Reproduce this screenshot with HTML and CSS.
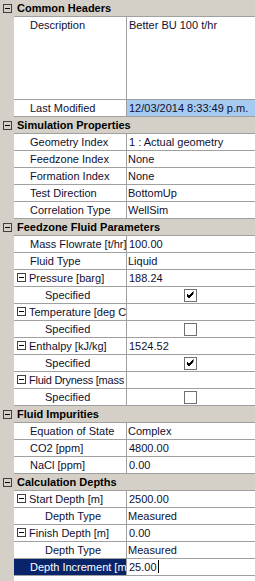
FILE: index.html
```html
<!DOCTYPE html>
<html lang="en">
<head>
<meta charset="UTF-8">
<title>Properties</title>
<link rel="stylesheet" href="styles.css">
</head>
<body>

<div class="grid">

    <!-- Common Headers -->
    <div class="row cat">
        <div class="gutter"><svg class="exp" width="9" height="9"><rect x="0.5" y="0.5" width="8" height="8" fill="none" stroke="#404040"/><path d="M2 4.5h5" stroke="#000"/></svg></div>
        <div class="cat-title">Common Headers</div>
    </div>
    <div class="row tall">
        <div class="gutter"></div>
        <div class="name">Description</div>
        <div class="value">Better BU 100 t/hr</div>
    </div>
    <div class="row">
        <div class="gutter"></div>
        <div class="name">Last Modified</div>
        <div class="value picked">12/03/2014 8:33:49 p.m.</div>
    </div>

    <!-- Simulation Properties -->
    <div class="row cat">
        <div class="gutter"><svg class="exp" width="9" height="9"><rect x="0.5" y="0.5" width="8" height="8" fill="none" stroke="#404040"/><path d="M2 4.5h5" stroke="#000"/></svg></div>
        <div class="cat-title">Simulation Properties</div>
    </div>
    <div class="row"><div class="gutter"></div><div class="name">Geometry Index</div><div class="value">1 : Actual geometry</div></div>
    <div class="row"><div class="gutter"></div><div class="name">Feedzone Index</div><div class="value list">None</div></div>
    <div class="row"><div class="gutter"></div><div class="name">Formation Index</div><div class="value list">None</div></div>
    <div class="row"><div class="gutter"></div><div class="name">Test Direction</div><div class="value list">BottomUp</div></div>
    <div class="row"><div class="gutter"></div><div class="name">Correlation Type</div><div class="value list">WellSim</div></div>

    <!-- Feedzone Fluid Parameters -->
    <div class="row cat">
        <div class="gutter"><svg class="exp" width="9" height="9"><rect x="0.5" y="0.5" width="8" height="8" fill="none" stroke="#404040"/><path d="M2 4.5h5" stroke="#000"/></svg></div>
        <div class="cat-title">Feedzone Fluid Parameters</div>
    </div>
    <div class="row"><div class="gutter"></div><div class="name">Mass Flowrate [t/hr]</div><div class="value">100.00</div></div>
    <div class="row"><div class="gutter"></div><div class="name">Fluid Type</div><div class="value list">Liquid</div></div>
    <div class="row">
        <div class="gutter"></div>
        <div class="name parent"><svg class="exp" width="9" height="9"><rect x="0.5" y="0.5" width="8" height="8" fill="none" stroke="#404040"/><path d="M2 4.5h5" stroke="#000"/></svg><span>Pressure [barg]</span></div>
        <div class="value">188.24</div>
    </div>
    <div class="row"><div class="gutter"></div><div class="name child">Specified</div><div class="value box"><span class="check on"></span></div></div>
    <div class="row">
        <div class="gutter"></div>
        <div class="name parent"><svg class="exp" width="9" height="9"><rect x="0.5" y="0.5" width="8" height="8" fill="none" stroke="#404040"/><path d="M2 4.5h5" stroke="#000"/></svg><span>Temperature [deg C</span></div>
        <div class="value"></div>
    </div>
    <div class="row"><div class="gutter"></div><div class="name child">Specified</div><div class="value box"><span class="check"></span></div></div>
    <div class="row">
        <div class="gutter"></div>
        <div class="name parent"><svg class="exp" width="9" height="9"><rect x="0.5" y="0.5" width="8" height="8" fill="none" stroke="#404040"/><path d="M2 4.5h5" stroke="#000"/></svg><span>Enthalpy [kJ/kg]</span></div>
        <div class="value">1524.52</div>
    </div>
    <div class="row"><div class="gutter"></div><div class="name child">Specified</div><div class="value box"><span class="check on"></span></div></div>
    <div class="row">
        <div class="gutter"></div>
        <div class="name parent"><svg class="exp" width="9" height="9"><rect x="0.5" y="0.5" width="8" height="8" fill="none" stroke="#404040"/><path d="M2 4.5h5" stroke="#000"/></svg><span class="tight">Fluid Dryness [mass</span></div>
        <div class="value"></div>
    </div>
    <div class="row"><div class="gutter"></div><div class="name child">Specified</div><div class="value box"><span class="check"></span></div></div>

    <!-- Fluid Impurities -->
    <div class="row cat">
        <div class="gutter"><svg class="exp" width="9" height="9"><rect x="0.5" y="0.5" width="8" height="8" fill="none" stroke="#404040"/><path d="M2 4.5h5" stroke="#000"/></svg></div>
        <div class="cat-title">Fluid Impurities</div>
    </div>
    <div class="row"><div class="gutter"></div><div class="name">Equation of State</div><div class="value list">Complex</div></div>
    <div class="row"><div class="gutter"></div><div class="name">CO2 [ppm]</div><div class="value">4800.00</div></div>
    <div class="row"><div class="gutter"></div><div class="name">NaCl [ppm]</div><div class="value">0.00</div></div>

    <!-- Calculation Depths -->
    <div class="row cat">
        <div class="gutter"><svg class="exp" width="9" height="9"><rect x="0.5" y="0.5" width="8" height="8" fill="none" stroke="#404040"/><path d="M2 4.5h5" stroke="#000"/></svg></div>
        <div class="cat-title">Calculation Depths</div>
    </div>
    <div class="row">
        <div class="gutter"></div>
        <div class="name parent"><svg class="exp" width="9" height="9"><rect x="0.5" y="0.5" width="8" height="8" fill="none" stroke="#404040"/><path d="M2 4.5h5" stroke="#000"/></svg><span>Start Depth [m]</span></div>
        <div class="value">2500.00</div>
    </div>
    <div class="row"><div class="gutter"></div><div class="name child">Depth Type</div><div class="value list">Measured</div></div>
    <div class="row">
        <div class="gutter"></div>
        <div class="name parent"><svg class="exp" width="9" height="9"><rect x="0.5" y="0.5" width="8" height="8" fill="none" stroke="#404040"/><path d="M2 4.5h5" stroke="#000"/></svg><span>Finish Depth [m]</span></div>
        <div class="value">0.00</div>
    </div>
    <div class="row"><div class="gutter"></div><div class="name child">Depth Type</div><div class="value list">Measured</div></div>
    <div class="row">
        <div class="gutter"></div>
        <div class="name selected">Depth Increment [m</div>
        <div class="value editing">25.00<span class="caret"></span></div>
    </div>

</div>

</body>
</html>
```

FILE: styles.css
```css
html, body {
    margin: 0;
    padding: 0;
    height: 100%;
}

body {
    background-color: #ffffff;
    color: #101030;
    font-family: "Liberation Sans", Arial, sans-serif;
    font-size: 11px;
    overflow: hidden;
}

.grid {
    min-height: 100%;
    background: linear-gradient(to right, #d4d0c8 14px, #ffffff 14px);
}

.row {
    display: flex;
    height: 17px;
    line-height: 16px;
}

.row.tall {
    height: 83px;
}

.gutter {
    flex: 0 0 14px;
    background-color: #d4d0c8;
    position: relative;
}

.gutter .exp {
    position: absolute;
    left: 3px;
    top: 4px;
}

.name,
.value,
.cat-title {
    box-sizing: border-box;
    border-bottom: 1px solid #a0a0a0;
    white-space: nowrap;
    overflow: hidden;
}

.name {
    flex: 0 0 113px;
    padding-left: 16px;
    border-right: 1px solid #a0a0a0;
}

.name.parent {
    padding-left: 3px;
    display: flex;
    align-items: center;
    gap: 3px;
}

.name.parent .exp {
    flex: 0 0 9px;
    margin-top: -1px;
}

.name.parent span {
    flex: 0 0 auto;
}

.name.parent .tight {
    letter-spacing: -0.25px;
}

.name.child {
    padding-left: 31px;
}

.name.selected {
    background-color: #0a246a;
    color: #ffffff;
}

.value {
    flex: 1;
    padding-left: 2px;
}

.value.list {
    padding-left: 1px;
}

.value.picked {
    background-color: #a6caf0;
}

.value.box {
    display: flex;
    justify-content: center;
    align-items: center;
    padding: 1px 0 0 0;
}

.value.editing {
    padding-left: 2px;
}

.caret {
    display: inline-block;
    width: 1px;
    height: 13px;
    margin-left: 1px;
    vertical-align: -2px;
    background-color: #000000;
}

.check {
    display: block;
    box-sizing: border-box;
    width: 13px;
    height: 13px;
    margin-left: -1px;
    border: 1px solid #707070;
    background-color: #ffffff;
}

.check.on {
    background: #ffffff url("data:image/svg+xml;utf8,<svg xmlns='http://www.w3.org/2000/svg' width='11' height='11'><path d='M2 5 L4 7 L8.5 2.5 M2 6 L4 8 L8.5 3.5 M2 4 L4 6 L8.5 1.5' stroke='black' fill='none' stroke-width='1'/></svg>") no-repeat center;
}

.row.cat {
    background-color: #d4d0c8;
}

.cat-title {
    flex: 1;
    padding-left: 3px;
    font-weight: bold;
    color: #000000;
}
```
